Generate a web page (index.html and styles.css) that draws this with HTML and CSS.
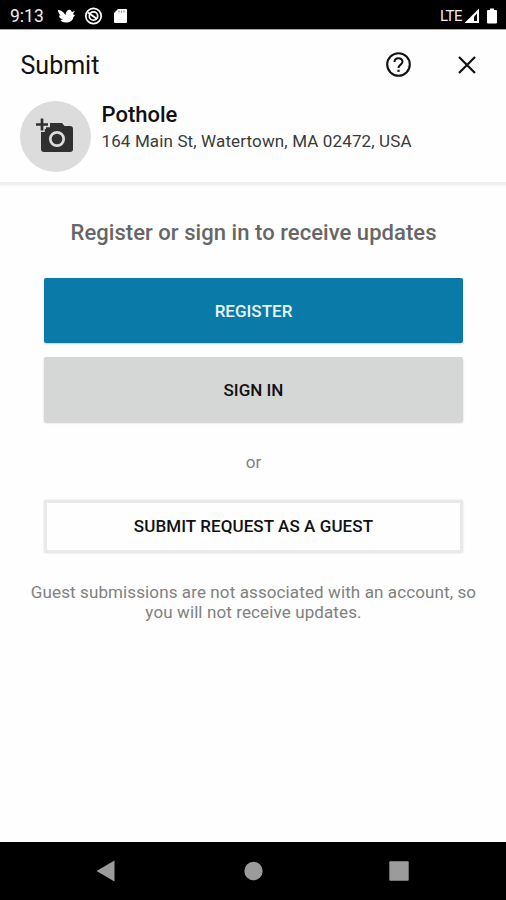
FILE: index.html
```html
<!DOCTYPE html>
<html lang="en">
<head>
    <meta charset="UTF-8">
    <meta name="viewport" content="width=device-width, initial-scale=1.0">
    <title>Submit</title>
    <link rel="stylesheet" href="styles.css">
</head>
<body>
    <div class="status-bar">
        <span class="clock">9:13</span>
        <svg class="status-left" width="76" height="20" viewBox="0 0 76 20">
            <path d="M1 4 C3 4 6 5 8.500 9 C9 5 11 3 13.500 4 L15 6 L18 5 L16 8 L18 9.500 C17 10 16 11 16 13 C14 16 11 16.500 9 16.500 C6 16.500 4 15.500 3.500 14 L6 13.500 C3 12.500 2 11.500 2 9.500 L3.500 9.500 C2 8 1 6 1 4 Z" fill="#fff"/>
            <circle cx="36.500" cy="10" r="7.700" fill="none" stroke="#fff" stroke-width="1.700"/>
            <circle cx="36.500" cy="10" r="4.200" fill="none" stroke="#fff" stroke-width="1.700"/>
            <path d="M31 6.500 L40 13" stroke="#fff" stroke-width="1.800"/>
            <path d="M61 3 H69 Q70 3 70 4 V16 Q70 17 69 17 H58 Q57 17 57 16 V7 Z" fill="#fff"/>
            <path d="M62 4.500 V6.500 M64.500 4.500 V6.500 M67 4.500 V6.500" stroke="#777" stroke-width="1"/>
        </svg>
        <span class="network">LTE</span>
        <svg class="status-right" width="36" height="20" viewBox="0 0 36 20">
            <path d="M14 2.500 V17 H-0.500 Z" fill="#fff"/>
            <path d="M12 7.500 V15 H9 V10.800 Z" fill="#000"/>
            <path d="M25 2.500 H29 V4 H31 Q32 4 32 5 V16.500 Q32 17.500 31 17.500 H23 Q22 17.500 22 16.500 V5 Q22 4 23 4 H25 Z" fill="#fff"/>
        </svg>
    </div>

    <header class="header">
        <div class="toolbar">
            <h1 class="title">Submit</h1>
            <svg class="help" width="26" height="26" viewBox="0 0 26 26">
                <circle cx="13.500" cy="12.500" r="11.300" fill="none" stroke="#111" stroke-width="2.100"/>
                <path d="M9.500 10 C9.500 5 17.500 5 17.500 9.800 C17.500 12.500 13.500 12.800 13.500 16" fill="none" stroke="#111" stroke-width="2"/>
                <path d="M13.500 17.700 V19.900" stroke="#111" stroke-width="2.200"/>
            </svg>
            <svg class="close" width="18" height="18" viewBox="0 0 18 18">
                <path d="M1 1 L17 17 M17 1 L1 17" stroke="#111" stroke-width="2.200"/>
            </svg>
        </div>
        <div class="request">
            <div class="photo">
                <svg width="40" height="36" viewBox="0 0 40 36">
                    <path d="M12 5 H28 L30.500 8 H36 Q39 8 39 11 V31 Q39 34 36 34 H10 Q7 34 7 31 V11 H12 Z" fill="#303030"/>
                    <path d="M8 0 V14 M1 6.500 H16" stroke="#dcdcdc" stroke-width="5.500"/>
                    <path d="M8 0.500 V12.500 M2 6.500 H14" stroke="#303030" stroke-width="2.700"/>
                    <circle cx="23" cy="21" r="6.700" fill="#303030" stroke="#dcdcdc" stroke-width="2.700"/>
                </svg>
            </div>
            <div class="details">
                <h2 class="type">Pothole</h2>
                <p class="address">164 Main St, Watertown, MA 02472, USA</p>
            </div>
        </div>
    </header>

    <main class="content">
        <h3 class="prompt">Register or sign in to receive updates</h3>
        <button class="btn btn-register"><span>REGISTER</span></button>
        <button class="btn btn-signin"><span>SIGN IN</span></button>
        <p class="or">or</p>
        <button class="btn btn-guest"><span>SUBMIT REQUEST AS A GUEST</span></button>
        <p class="note">Guest submissions are not associated with an account, so<br>you will not receive updates.</p>
    </main>

    <nav class="nav-bar">
        <svg width="22" height="22" viewBox="0 0 22 22"><path d="M0.500 11 L18.500 0.500 V21.500 Z" fill="#9b9b9b"/></svg>
        <svg width="22" height="22" viewBox="0 0 22 22"><circle cx="11.500" cy="11" r="9.200" fill="#9b9b9b"/></svg>
        <svg width="22" height="22" viewBox="0 0 22 22"><rect x="1.300" y="1.300" width="19.400" height="19.400" rx="1" fill="#9b9b9b"/></svg>
    </nav>
</body>
</html>
```
FILE: styles.css
```css
* {
    box-sizing: border-box;
}
body {
    margin: 0;
    height: 900px;
    display: flex;
    flex-direction: column;
    overflow: hidden;
    font-family: Roboto, "Liberation Sans", sans-serif;
    background: #fefefe;
    color: #111;
}
h1, h2, h3, p {
    margin: 0;
    white-space: nowrap;
}
svg {
    display: block;
    flex: none;
}
.status-bar {
    height: 30px;
    flex: none;
    display: flex;
    align-items: center;
    padding: 2px 5px 0 10px;
    background: #000;
    border-bottom: 1px solid #aaa;
    color: #eee;
}
.clock {
    width: 47px;
    font-size: 17.5px;
    font-weight: 400;
}
.network {
    margin-left: auto;
    margin-right: 3px;
    font-size: 15px;
    letter-spacing: -0.5px;
    font-weight: 400;
}
.header {
    height: 155px;
    flex: none;
    border-bottom: 3px solid #efefef;
    box-shadow: 0 1px 1px rgba(0, 0, 0, 0.03);
}
.toolbar {
    height: 70px;
    display: flex;
    align-items: center;
    padding: 0 30px 0 20.5px;
}
.title {
    margin-top: 2px;
    font-size: 25px;
    line-height: 30px;
    font-weight: 400;
}
.help {
    margin-left: auto;
    margin-right: 47px;
}
.request {
    display: flex;
    padding: 1px 20px 0;
}
.photo {
    width: 71px;
    height: 71px;
    border-radius: 50%;
    background: #dcdcdc;
    display: flex;
    align-items: center;
    justify-content: center;
    padding: 0 3px 1px 0;
}
.details {
    margin-left: 10.5px;
}
.type {
    font-size: 22px;
    line-height: 28px;
    font-weight: 500;
}
.address {
    font-size: 17px;
    line-height: 24px;
    letter-spacing: 0.13px;
    color: #3a3a3a;
}
.content {
    flex: 1;
    display: flex;
    flex-direction: column;
    align-items: center;
    padding-left: 1px;
}
.prompt {
    margin-top: 34px;
    font-size: 22px;
    line-height: 28px;
    font-weight: 500;
    letter-spacing: 0.05px;
    color: #666;
}
.btn {
    width: 419px;
    height: 65px;
    padding: 0;
    border: none;
    border-radius: 2px;
    font-family: inherit;
    font-size: 17px;
    font-weight: 500;
    color: #111;
    box-shadow: 0 1px 2px rgba(0, 0, 0, 0.2);
}
.btn-register {
    margin-top: 31px;
    background: #0a7ba8;
    color: #e9f5fa;
}
.btn-signin {
    margin-top: 14px;
    background: #d5d7d6;
}
.or {
    margin-top: 28px;
    font-size: 17px;
    line-height: 24px;
    color: #808080;
}
.btn-guest {
    margin-top: 26px;
    height: 53px;
    padding-bottom: 2px;
    background: #fefefe;
    border: 3px solid #e9e9e9;
    letter-spacing: 0.08px;
    box-shadow: 0 0 2px rgba(0, 0, 0, 0.15);
}
.note {
    margin-top: 29px;
    font-size: 17px;
    line-height: 20px;
    letter-spacing: 0.11px;
    text-align: center;
    color: #808080;
}
.nav-bar {
    height: 58px;
    flex: none;
    display: flex;
    align-items: center;
    justify-content: space-between;
    padding: 0 96px;
    background: #000;
}
```
